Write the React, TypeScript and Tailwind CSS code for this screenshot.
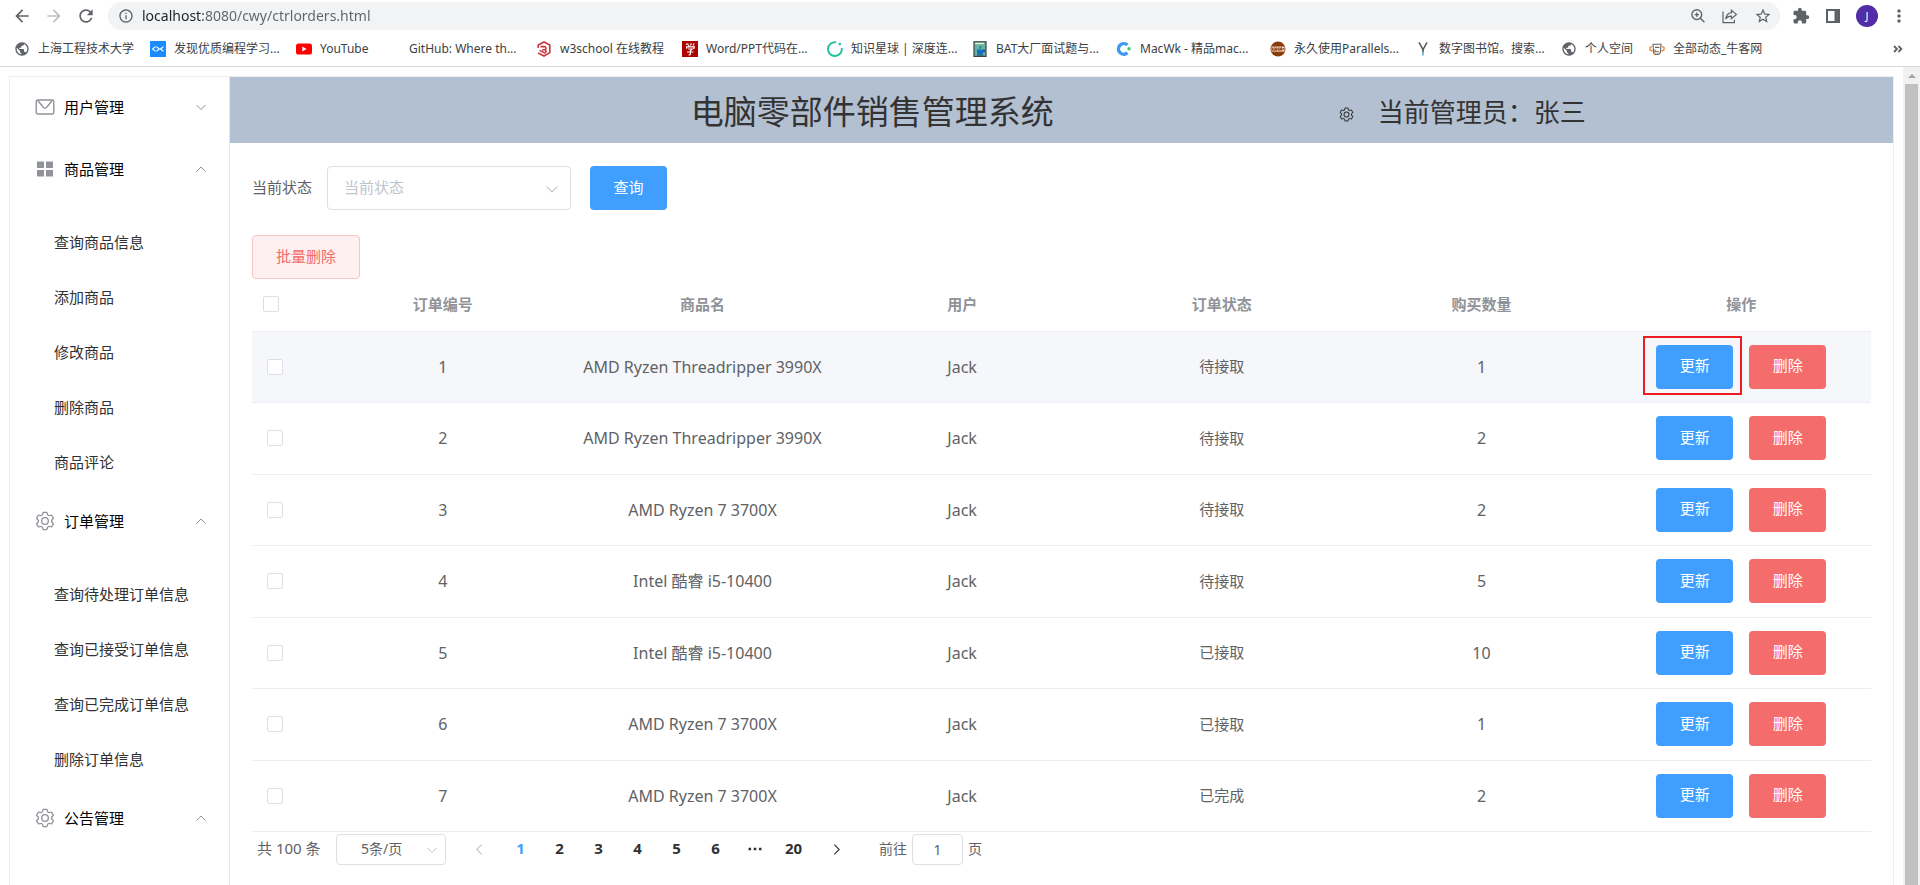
import React, { useState } from "react";
import {
  MdArrowBack,
  MdArrowForward,
  MdExtension,
  MdInfoOutline,
  MdMoreVert,
  MdPublic,
  MdRefresh,
  MdStarBorder,
} from "react-icons/md";

const GEAR_PATH =
  "M600.704 64a32 32 0 0 1 30.464 22.208l35.2 109.376c14.784 7.232 28.928 15.36 42.432 24.512l112.384-24.192a32 32 0 0 1 34.432 15.36L944.32 364.8a32 32 0 0 1-4.032 37.504l-77.12 85.12a357.12 357.12 0 0 1 0 49.024l77.12 85.248a32 32 0 0 1 4.032 37.504l-88.704 153.6a32 32 0 0 1-34.432 15.296L708.8 803.904c-13.44 9.088-27.648 17.28-42.368 24.512l-35.264 109.376A32 32 0 0 1 600.704 960H423.296a32 32 0 0 1-30.464-22.208L357.696 828.48a351.616 351.616 0 0 1-42.56-24.64l-112.32 24.256a32 32 0 0 1-34.432-15.36L79.68 659.2a32 32 0 0 1 4.032-37.504l77.12-85.248a357.12 357.12 0 0 1 0-48.896l-77.12-85.248A32 32 0 0 1 79.68 364.8l88.704-153.6a32 32 0 0 1 34.432-15.296l112.32 24.256c13.568-9.152 27.776-17.408 42.56-24.64l35.2-109.312A32 32 0 0 1 423.232 64H600.64zm-23.424 64H446.72l-36.352 113.088-24.512 11.968a294.113 294.113 0 0 0-34.816 20.096l-22.656 15.36-116.224-25.088-65.28 113.152 79.68 88.192-1.92 27.136a293.12 293.12 0 0 0 0 40.192l1.92 27.136-79.808 88.192 65.344 113.152 116.224-25.024 22.656 15.296a294.113 294.113 0 0 0 34.816 20.096l24.512 11.968L446.72 896h130.688l36.48-113.152 24.448-11.904a288.282 288.282 0 0 0 34.752-20.096l22.592-15.296 116.288 25.024 65.28-113.152-79.744-88.192 1.92-27.136a293.12 293.12 0 0 0 0-40.256l-1.92-27.136 79.808-88.128-65.344-113.152-116.288 24.96-22.592-15.232a287.616 287.616 0 0 0-34.752-20.096l-24.448-11.904L577.344 128zM512 320a192 192 0 1 1 0 384 192 192 0 0 1 0-384zm0 64a128 128 0 1 0 0 256 128 128 0 0 0 0-256z";

function GearIcon({ className }: { className: string }) {
  return (
    <svg viewBox="32 32 960 960" className={className} fill="currentColor" aria-hidden="true">
      <path d={GEAR_PATH} />
    </svg>
  );
}

function MailIcon({ className }: { className: string }) {
  return (
    <svg viewBox="0 0 20 20" className={className} fill="none" stroke="currentColor" strokeWidth="1.4" aria-hidden="true">
      <rect x="1.2" y="3" width="17.6" height="14" rx="1.6" />
      <path d="M3 3.8L8.3 10.2Q10 12 11.7 10.2L17 3.8" />
    </svg>
  );
}

function GridIcon({ className }: { className: string }) {
  return (
    <svg viewBox="0 0 20 20" className={className} fill="currentColor" aria-hidden="true">
      <path d="M2 2.5h7v6.5H2zM11 2.5h7v6.5h-7zM2 11h7v6.5H2zM11 11h7v6.5h-7z" />
    </svg>
  );
}

function Chevron({ dir, className }: { dir: "up" | "down" | "left" | "right"; className: string }) {
  const paths = {
    up: "M1.5 8.5L6 4L10.5 8.5",
    down: "M1.5 4L6 8.5L10.5 4",
    left: "M8 1.5L3.5 6L8 10.5",
    right: "M4 1.5L8.5 6L4 10.5",
  };
  return (
    <svg viewBox="0 0 12 12" className={className} fill="none" stroke="currentColor" aria-hidden="true">
      <path d={paths[dir]} />
    </svg>
  );
}

/* ---------- browser chrome ---------- */

const fav = "h-4 w-4 shrink-0";

const FavCode = () => (
  <svg viewBox="0 0 16 16" className={fav}>
    <rect width="16" height="16" fill="#1a8cff" />
    <path d="M5.4 5.6L2.6 8l2.8 2.4M13.4 5.8L10.4 8l3 2.2M6.2 5.6L9.4 8l-3.2 2.4" fill="none" stroke="#fff" strokeWidth="1.1" />
  </svg>
);
const FavYouTube = () => (
  <svg viewBox="0 0 16 16" className={fav}>
    <rect y="2.5" width="16" height="11" rx="2.6" fill="#f00" />
    <path d="M6.3 5.6v4.8L10.6 8z" fill="#fff" />
  </svg>
);
const FavW3 = () => (
  <svg viewBox="0 0 16 16" className={fav} fill="none" stroke="#c8373d">
    <path d="M2.2 7V4L8 1l5.8 3v7.6L8 15l-5.8-3" strokeWidth="1.6" />
    <path d="M4.4 5.6h4.4a1.7 1.7 0 0 1 0 3.2H6.2m2.6 0a1.6 1.6 0 0 1 0 3.1L3.6 9.4" strokeWidth="1.6" />
  </svg>
);
const FavWord = () => (
  <svg viewBox="0 0 16 16" className={fav}>
    <rect width="16" height="16" fill="#b00000" />
    <path d="M4 3.4l2.6-.6M9.4 2.2l-1 2.2M12 2.6l-1 2M4 5.8h8.4l-.6 2M4.6 5.8v2M6.2 8h4L8.4 9.8v3.2q0 1-1.8.8M5 11h6.4M6.6 4v1.4" fill="none" stroke="#fff" strokeWidth="1.2" />
  </svg>
);
const FavPlanet = () => (
  <svg viewBox="0 0 16 16" className={fav}>
    <path d="M9 1.3A6.9 6.9 0 1 0 14.7 7" fill="none" stroke="#1fc29b" strokeWidth="1.9" />
    <circle cx="12.8" cy="3.1" r="1.3" fill="#1fc29b" />
  </svg>
);
const FavBat = () => (
  <svg viewBox="0 0 16 16" className={fav}>
    <rect x="2" y=".8" width="12" height="14.6" fill="#63b3a6" stroke="#3a4447" strokeWidth="1.2" />
    <path d="M3.2 1.8h9v1.4h-9z" fill="#f3ecc9" />
    <path d="M5 8.6h6v2.6q0 2-3 2t-3-2z" fill="#1769c7" />
    <path d="M11 9h1.4v1.8H11M7.6 7.6l1.4-2.2M5 14h6.4" fill="none" stroke="#173f78" />
  </svg>
);
const FavMacwk = () => (
  <svg viewBox="0 0 16 16" className={fav}>
    <path d="M11.4 4A5.3 5.3 0 1 0 11.4 11.8" fill="none" stroke="#3f97f6" strokeWidth="3.4" />
    <circle cx="13" cy="7.8" r="1.7" fill="#35cf5b" />
  </svg>
);
const FavParallels = () => (
  <svg viewBox="0 0 16 16" className={fav}>
    <circle cx="8" cy="8" r="7.5" fill="#8a3b0a" />
    <path d="M1.5 5.6h13v5h-13z" fill="#f4e3d8" />
    <path d="M2.4 7h3v2.4h-3zM6.4 6.2v4M8 7h2.4v2.2H8zM11.4 6v4M12.6 7.6h1.4M2 8.2h12" fill="none" stroke="#8a3b0a" strokeWidth=".8" />
  </svg>
);
const FavLibrary = () => (
  <svg viewBox="0 0 16 16" className={fav} fill="none">
    <path d="M4 1.4l4 7.2 4-7.2" stroke="#555" strokeWidth="1.5" />
    <path d="M8 8.4V11" stroke="#555" strokeWidth="1.6" />
    <path d="M8 11v3.4" stroke="#5fbbe0" strokeWidth="1.8" />
  </svg>
);
const FavNiuke = () => (
  <svg viewBox="0 0 16 16" className={fav} fill="none">
    <path d="M3.6 3.2h9M4 3.4l.6 8.4 2 1.6h2.8l2-1.6.6-8.4M6 6.4h4.4M6 8.4v2.4h4" stroke="#666" strokeWidth="1.1" />
    <path d="M3 5.2L.8 6.8l.4 2.4L3.6 10M13 5.2l2.2 1.6-.4 2.4-2.4.8M4.4 12l1.6 1.6" stroke="#f08a35" strokeWidth="1.4" />
  </svg>
);
const FavGlobe = () => <MdPublic className="h-4 w-4 shrink-0 text-[#5f6368]" />;
const FavBlank = () => <span className={fav} />;

const bookmarks: { label: string; Icon: React.FC; width: string }[] = [
  { label: "上海工程技术大学", Icon: FavGlobe, width: "w-[136px]" },
  { label: "发现优质编程学习...", Icon: FavCode, width: "w-[146px]" },
  { label: "YouTube", Icon: FavYouTube, width: "w-[89px]" },
  { label: "GitHub: Where th...", Icon: FavBlank, width: "w-[151px]" },
  { label: "w3school 在线教程", Icon: FavW3, width: "w-[146px]" },
  { label: "Word/PPT代码在...", Icon: FavWord, width: "w-[145px]" },
  { label: "知识星球 | 深度连...", Icon: FavPlanet, width: "w-[145px]" },
  { label: "BAT大厂面试题与...", Icon: FavBat, width: "w-[144px]" },
  { label: "MacWk - 精品mac...", Icon: FavMacwk, width: "w-[154px]" },
  { label: "永久使用Parallels...", Icon: FavParallels, width: "w-[145px]" },
  { label: "数字图书馆。搜索...", Icon: FavLibrary, width: "w-[146px]" },
  { label: "个人空间", Icon: FavGlobe, width: "w-[88px]" },
  { label: "全部动态_牛客网", Icon: FavNiuke, width: "w-[146px]" },
];

function BrowserBar() {
  return (
    <header className="border-b border-[#d5d7da] bg-white text-[#5f6368]">
      <div className="flex h-8 items-center pr-[11px] pl-3">
        <button type="button" aria-label="后退" className="w-8">
          <MdArrowBack className="h-5 w-5" />
        </button>
        <button type="button" aria-label="前进" className="w-8 text-[#bdc1c6]">
          <MdArrowForward className="h-5 w-5" />
        </button>
        <button type="button" aria-label="刷新" className="w-8">
          <MdRefresh className="h-5 w-5" />
        </button>
        <div className="flex h-7 flex-1 items-center rounded-full bg-[#f1f3f4] pr-2 pl-2.5">
          <MdInfoOutline className="mr-2 h-4 w-4 shrink-0" />
          <input
            aria-label="地址"
            defaultValue="localhost:8080/cwy/ctrlorders.html"
            className="min-w-0 flex-1 bg-linear-to-r from-[#202124] from-[61px] to-[#5f6368] to-[61px] bg-clip-text text-sm text-transparent outline-none"
          />
          <div className="flex items-center gap-4">
            <button type="button" aria-label="缩放">
              <svg viewBox="0 0 16 16" className="h-4 w-4" fill="none" stroke="currentColor" strokeWidth="1.4">
                <circle cx="6.8" cy="6.6" r="4.9" />
                <path d="M10.4 10.2l4 4M6.8 4.4v4.4M4.6 6.6H9" />
              </svg>
            </button>
            <button type="button" aria-label="分享">
              <svg viewBox="0 0 16 16" className="h-4 w-4" fill="none" stroke="currentColor" strokeWidth="1.2">
                <path d="M1 3.4v11.2h11.4v-2.8" />
                <path d="M9.4 2.2l5 4.2-5 4.2V8.2Q5.6 8 3.6 11 4.6 5.2 9.4 4.6z" />
              </svg>
            </button>
            <button type="button" aria-label="收藏">
              <MdStarBorder className="h-[18px] w-[18px]" />
            </button>
          </div>
        </div>
        <div className="flex items-center gap-[15px] pl-3">
          <button type="button" aria-label="扩展程序">
            <MdExtension className="h-[18px] w-[18px]" />
          </button>
          <button type="button" aria-label="侧边栏">
            <svg viewBox="0 0 16 16" className="h-4 w-4" fill="currentColor">
              <path d="M1 1h14v14H1zM3 3v10h6.5V3z" fillRule="evenodd" />
            </svg>
          </button>
          <button
            type="button"
            aria-label="账户 J"
            className="flex h-[22px] w-[22px] items-center justify-center rounded-full bg-[#512da8] text-[11px] text-white"
          >
            J
          </button>
          <button type="button" aria-label="更多" className="-ml-1">
            <MdMoreVert className="h-5 w-5" />
          </button>
        </div>
      </div>
      <nav aria-label="书签" className="flex h-[34px] items-center pb-px pl-3.5">
        {bookmarks.map(({ label, Icon, width }) => (
          <a key={label} href="#" className={`flex shrink-0 items-center gap-2 text-xs whitespace-nowrap text-[#3c4043] ${width}`}>
            <Icon />
            {label}
          </a>
        ))}
        <button type="button" aria-label="更多书签" className="mr-4 ml-auto">
          <svg viewBox="0 0 12 12" className="h-3 w-3" fill="none" stroke="currentColor" strokeWidth="1.8">
            <path d="M2 3L5 6L2 9M6.4 3L9.4 6L6.4 9" />
          </svg>
        </button>
      </nav>
    </header>
  );
}

/* ---------- sidebar ---------- */

const menu = [
  { title: "用户管理", Icon: MailIcon, open: false, items: [] as string[] },
  { title: "商品管理", Icon: GridIcon, open: true, items: ["查询商品信息", "添加商品", "修改商品", "删除商品", "商品评论"] },
  { title: "订单管理", Icon: GearIcon, open: true, items: ["查询待处理订单信息", "查询已接受订单信息", "查询已完成订单信息", "删除订单信息"] },
  { title: "公告管理", Icon: GearIcon, open: true, items: [] as string[] },
];

function Sidebar() {
  return (
    <nav aria-label="主菜单" className="w-55 shrink-0 border-r border-[#e6e6e6]">
      {menu.map(({ title, Icon, open, items }) => (
        <section key={title}>
          <button type="button" aria-expanded={open} className="flex h-[62px] w-full items-center pr-[22px] pb-0.5 pl-[25px] text-[15px] text-black">
            <Icon className="mr-[9px] h-5 w-5 text-[#909399]" />
            {title}
            <Chevron dir={open ? "up" : "down"} className="ml-auto h-3 w-3 text-[#909399]" />
          </button>
          {items.length > 0 && (
            <ul className="pt-[15px]">
              {items.map((item) => (
                <li key={item}>
                  <a href="#" className="flex h-[55px] items-center pb-0.5 pl-11 text-[15px] text-[#303133]">
                    {item}
                  </a>
                </li>
              ))}
            </ul>
          )}
        </section>
      ))}
    </nav>
  );
}

/* ---------- orders ---------- */

const columns = ["订单编号", "商品名", "用户", "订单状态", "购买数量", "操作"];

const orders = [
  { id: 1, name: "AMD Ryzen Threadripper 3990X", user: "Jack", state: "待接取", count: 1 },
  { id: 2, name: "AMD Ryzen Threadripper 3990X", user: "Jack", state: "待接取", count: 2 },
  { id: 3, name: "AMD Ryzen 7 3700X", user: "Jack", state: "待接取", count: 2 },
  { id: 4, name: "Intel 酷睿 i5-10400", user: "Jack", state: "待接取", count: 5 },
  { id: 5, name: "Intel 酷睿 i5-10400", user: "Jack", state: "已接取", count: 10 },
  { id: 6, name: "AMD Ryzen 7 3700X", user: "Jack", state: "已接取", count: 1 },
  { id: 7, name: "AMD Ryzen 7 3700X", user: "Jack", state: "已完成", count: 2 },
];

function Checkbox({ label }: { label: string }) {
  return (
    <input
      type="checkbox"
      aria-label={label}
      className="block h-4 w-4 appearance-none rounded-xs border border-[#dcdfe6] bg-white checked:border-[#409eff] checked:bg-[#409eff]"
    />
  );
}

const solidButton = "h-11 w-[77px] rounded pb-0.5 text-[15px] text-white";

function OrdersTable() {
  return (
    <table className="w-full table-fixed border-collapse text-center text-base text-[#606266]">
      <thead>
        <tr className="h-[52px] border-b border-[#ebeef5] text-[15px] text-[#909399]">
          <th className="w-[61px] pb-0.5 pl-[11px]">
            <Checkbox label="全选" />
          </th>
          {columns.map((c) => (
            <th key={c} className="pb-0.5 font-bold">
              {c}
            </th>
          ))}
        </tr>
      </thead>
      <tbody>
        {orders.map((o) => (
          <tr key={o.id} className="h-[71px] border-b border-[#ebeef5] first:bg-[#f5f7fa] even:h-[72px]">
            <td className="pl-[15px]">
              <Checkbox label={`选择订单 ${o.id}`} />
            </td>
            <td>{o.id}</td>
            <td>{o.name}</td>
            <td>{o.user}</td>
            <td className="text-[15px]">{o.state}</td>
            <td>{o.count}</td>
            <td>
              <div className="flex justify-center gap-4">
                <span className="relative">
                  <button type="button" className={`${solidButton} bg-[#409eff]`}>
                    更新
                  </button>
                  {o.id === 1 && (
                    <span className="pointer-events-none absolute -top-[9px] -right-[9px] -bottom-[6px] -left-[13px] border-2 border-[#ed1c24]" />
                  )}
                </span>
                <button type="button" className={`${solidButton} bg-[#f56c6c]`}>
                  删除
                </button>
              </div>
            </td>
          </tr>
        ))}
      </tbody>
    </table>
  );
}

function Pagination() {
  const [page, setPage] = useState(1);
  const cell = "h-[31px] w-[39px]";
  const number = (n: number) => (
    <button
      key={n}
      type="button"
      onClick={() => setPage(n)}
      className={`${cell} ${n === page ? "text-[#409eff]" : "text-[#303133]"}`}
    >
      {n}
    </button>
  );
  return (
    <nav aria-label="分页" className="flex items-center pt-0.5 pl-[5px] text-sm text-[#606266]">
      <span className="w-[79px] text-[15px]">共 100 条</span>
      <div className="relative">
        <select aria-label="每页条数" className="h-[31px] w-[110px] appearance-none rounded border border-[#dcdfe6] bg-white pl-6 text-sm outline-none">
          <option>5条/页</option>
          <option>10条/页</option>
        </select>
        <Chevron dir="down" className="pointer-events-none absolute top-2.5 right-2 h-3 w-3 text-[#c0c4cc]" />
      </div>
      <div className="flex items-center pl-3 text-[15px] font-bold">
        <button type="button" aria-label="上一页" className="flex w-[43px] justify-center text-[#c0c4cc]">
          <Chevron dir="left" className="h-[13px] w-[13px]" />
        </button>
        {[1, 2, 3, 4, 5, 6].map(number)}
        <span className={`${cell} flex items-center justify-center text-[#303133]`}>
          <svg viewBox="0 0 14 4" className="h-1 w-3.5" fill="currentColor">
            <path d="M.5 .8h2.6v2.4H.5zM5.7 .8h2.6v2.4H5.7zM10.9 .8h2.6v2.4h-2.6z" />
          </svg>
        </span>
        {number(20)}
        <button type="button" aria-label="下一页" className="flex w-[47px] justify-center text-[#303133]">
          <Chevron dir="right" className="h-[13px] w-[13px]" />
        </button>
      </div>
      <label className="flex items-center gap-[5px] pl-[19px]">
        前往
        <input defaultValue="1" className="h-[31px] w-[51px] rounded border border-[#dcdfe6] text-center outline-none" />
        页
      </label>
    </nav>
  );
}

export default function App() {
  return (
    <div className="flex min-h-screen flex-col bg-white font-['Noto_Sans','Noto_Sans_CJK_SC',sans-serif]">
      <BrowserBar />
      <div className="flex flex-1">
        <div className="flex min-w-0 flex-1 pt-[9px] pr-[9px] pl-[9px]">
          <div className="flex min-w-0 flex-1 border border-b-0 border-[#eeeeee]">
            <Sidebar />
            <div className="min-w-0 flex-1">
              <header className="flex h-[66px] items-center bg-[#b3c0d1] text-[#333333]">
                <h1 className="w-2/3 pt-0.5 pl-44 text-center text-[33px] leading-none">电脑零部件销售管理系统</h1>
                <div className="flex items-center gap-6 pt-2">
                  <GearIcon className="h-[15px] w-[15px]" />
                  <span className="pb-1 text-[26px] leading-none">当前管理员：张三</span>
                </div>
              </header>
              <main className="px-[22px] pt-[23px]">
                <form className="flex items-center" onSubmit={(e) => e.preventDefault()}>
                  <label htmlFor="state" className="w-[75px] pb-0.5 text-[15px] text-[#606266]">
                    当前状态
                  </label>
                  <div className="relative mr-[19px]">
                    <select
                      id="state"
                      defaultValue=""
                      className="h-11 w-[244px] appearance-none rounded border border-[#dcdfe6] bg-white pb-0.5 pl-4 text-[15px] text-[#c0c4cc] outline-none"
                    >
                      <option value="">当前状态</option>
                      <option>待接取</option>
                      <option>已接取</option>
                      <option>已完成</option>
                    </select>
                    <Chevron dir="down" className="pointer-events-none absolute top-4 right-3 h-3.5 w-3.5 text-[#c0c4cc]" />
                  </div>
                  <button type="submit" className={`${solidButton} bg-[#409eff]`}>
                    查询
                  </button>
                </form>
                <button type="button" className="mt-[25px] block h-11 w-[108px] rounded border border-[#fbc4c4] bg-[#fef0f0] pb-0.5 text-[15px] text-[#f56c6c]">
                  批量删除
                </button>
                <OrdersTable />
                <Pagination />
              </main>
            </div>
          </div>
        </div>
        <div aria-hidden="true" className="flex w-[17px] flex-col items-center bg-[#f1f1f1]">
          <div className="flex h-[17px] items-center">
            <svg viewBox="0 0 8 4" className="h-1 w-2 fill-[#a3a3a3]">
              <path d="M0 4L4 0L8 4z" />
            </svg>
          </div>
          <div className="w-[13px] flex-1 bg-[#c1c1c1]" />
        </div>
      </div>
    </div>
  );
}
